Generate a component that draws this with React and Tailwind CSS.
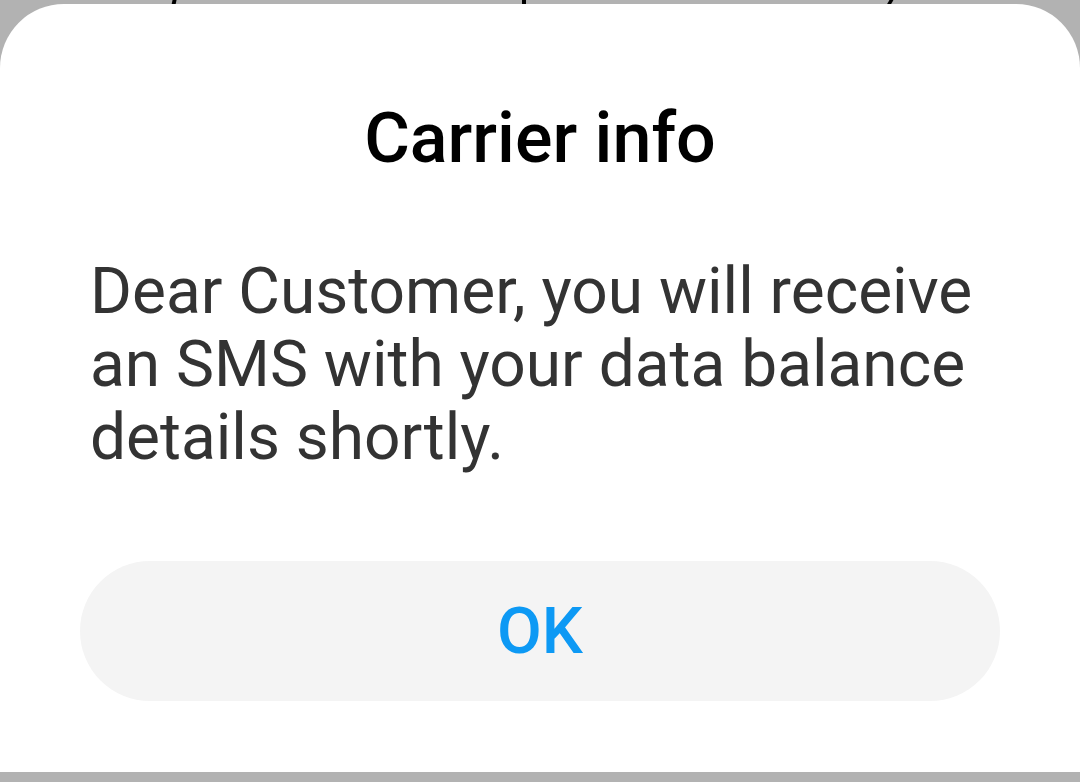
export default function App() {
  return (
    <div className="relative h-[782px] w-[1080px] overflow-hidden bg-[#b2b2b2] pt-[4px]" style={{ fontFamily: 'Roboto, "Noto Sans", sans-serif' }}>
      <div className="absolute left-[172px] top-0 h-[5px] w-[4px] -skew-x-12 bg-black" />
      <div className="absolute left-[522px] top-0 h-[5px] w-[4px] bg-black" />
      <div className="absolute left-[888px] top-0 h-[5px] w-[4px] skew-x-[-30deg] bg-black" />
      <div className="relative flex h-[768px] flex-col items-center rounded-t-[64px] bg-white px-[90px] pt-[94px]">
        <h1 className="text-center text-[70px] font-medium leading-[80px] text-black">Carrier info</h1>
        <p className="mt-[77px] w-full text-[64px] leading-[73px] text-[#333333]">
          Dear Customer, you will receive an SMS with your data balance details shortly.
        </p>
        <div className="mt-[87px] flex h-[140px] w-[920px] shrink-0 items-center justify-center rounded-full bg-[#f4f4f4]">
          <span className="text-[65px] font-medium leading-none text-[#0d99f4]">OK</span>
        </div>
      </div>
    </div>
  );
}
